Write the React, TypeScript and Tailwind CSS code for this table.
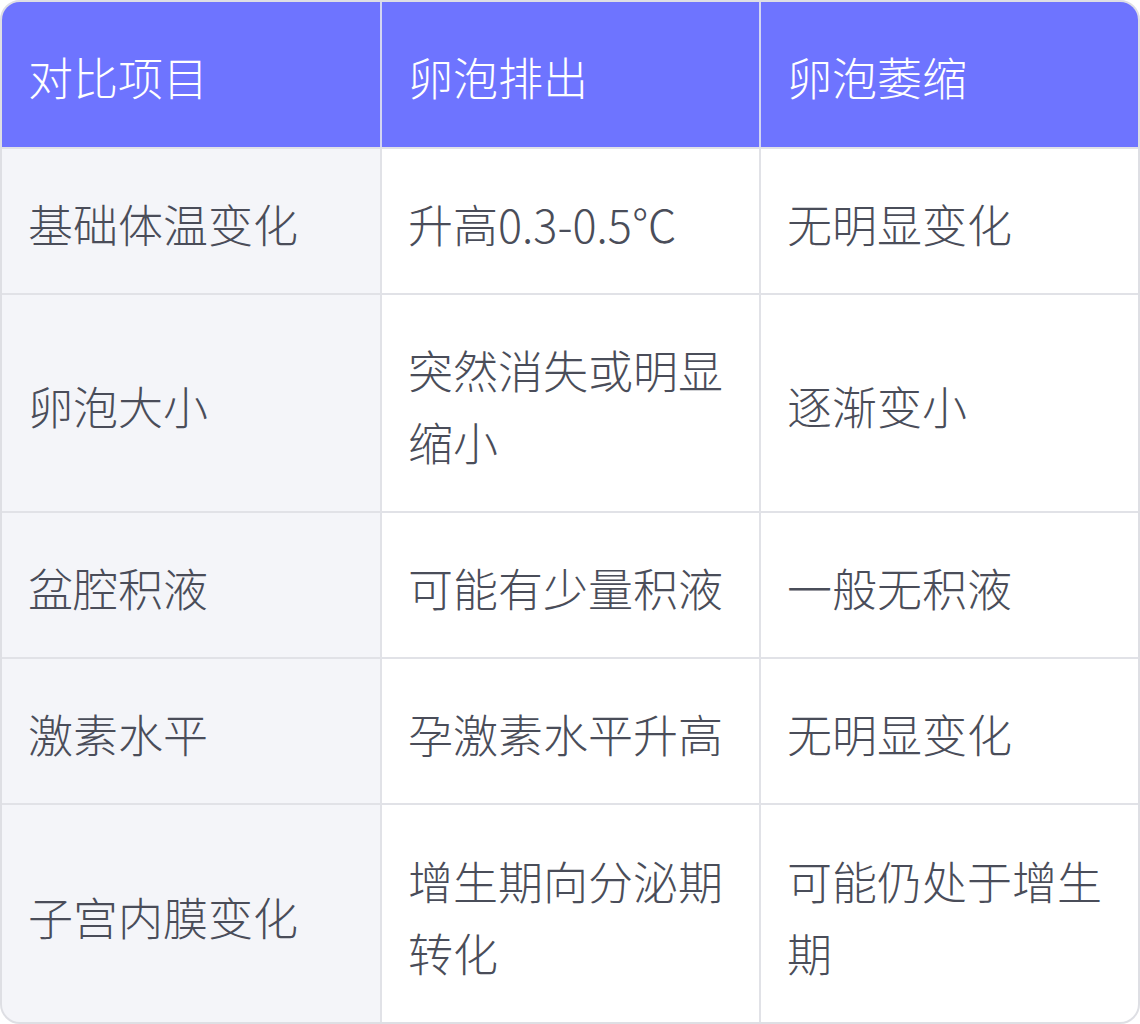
import React from "react";

const rows: [string, string, string][] = [
  ["基础体温变化", "升高0.3-0.5℃", "无明显变化"],
  ["卵泡大小", "突然消失或明显缩小", "逐渐变小"],
  ["盆腔积液", "可能有少量积液", "一般无积液"],
  ["激素水平", "孕激素水平升高", "无明显变化"],
  ["子宫内膜变化", "增生期向分泌期转化", "可能仍处于增生期"],
];

export default function App() {
  return (
    <div
      className="w-[1140px] h-[1024px] bg-white"
      style={{ fontFamily: '"Noto Sans CJK SC", "Noto Sans", sans-serif' }}
    >
      <div className="w-[1140px] h-[1024px] rounded-[20px] border-2 border-[#dedfe4] overflow-hidden bg-[#e1e2e7] flex flex-col gap-[2px]">
        <div className="grid grid-cols-[378px_377px_377px] gap-x-[2px] bg-[#d3d5f2] h-[145px] shrink-0">
          {["对比项目", "卵泡排出", "卵泡萎缩"].map((h) => (
            <div
              key={h}
              className="bg-[#6e74ff] text-white font-light text-[45px] leading-[72px] px-[26px] pt-[5px] flex items-center"
            >
              {h}
            </div>
          ))}
        </div>
        {rows.map((r, i) => (
          <div
            key={i}
            className={`grid grid-cols-[378px_377px_377px] gap-x-[2px] ${i === 4 ? "flex-1" : ""}`}
          >
            {r.map((c, j) => (
              <div
                key={j}
                className={`${j === 0 ? "bg-[#f4f5f9]" : "bg-white"} text-[#4a4d59] font-light text-[45px] leading-[72px] px-[26px] pt-[39px] pb-[33px] flex items-center`}
              >
                <span>{c}</span>
              </div>
            ))}
          </div>
        ))}
      </div>
    </div>
  );
}
